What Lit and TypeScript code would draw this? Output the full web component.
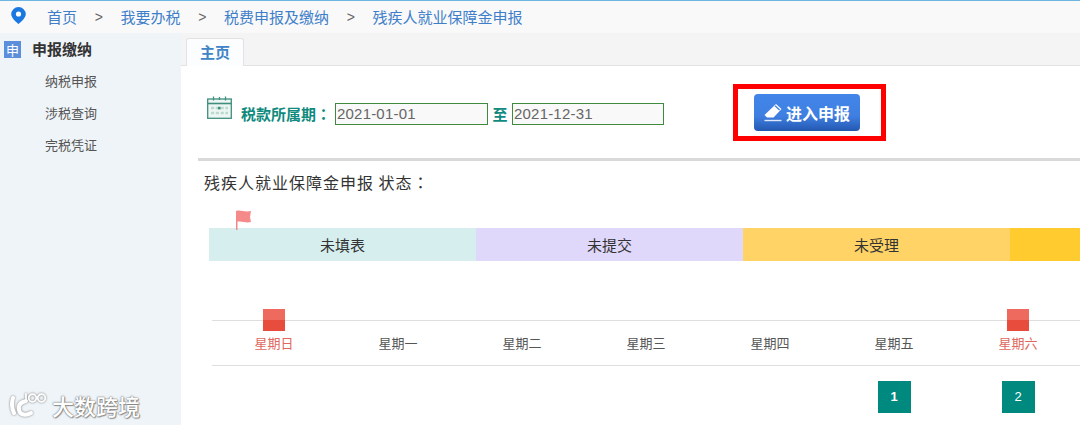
import { LitElement, html, css, svg } from "lit";
import { customElement } from "lit/decorators.js";

const FONT = css`"Noto Sans CJK SC", "Liberation Sans", sans-serif`;
const crumbs = ["首页", "我要办税", "税费申报及缴纳", "残疾人就业保障金申报"];
const menu = ["纳税申报", "涉税查询", "完税凭证"];
const stages = [
  { t: "未填表", c: "s1" },
  { t: "未提交", c: "s2" },
  { t: "未受理", c: "s3" },
  { t: "", c: "s4" },
];
const week = [
  { t: "星期日", off: true },
  { t: "星期一", off: false },
  { t: "星期二", off: false },
  { t: "星期三", off: false },
  { t: "星期四", off: false },
  { t: "星期五", off: false },
  { t: "星期六", off: true },
];
const days = ["", "", "", "", "", "1", "2"];

@customElement("app-root")
export class AppRoot extends LitElement {
  static styles = css`
    :host { display: block; width: 1080px; height: 425px; overflow: hidden; position: relative; background: #fff; font-family: ${FONT}; color: #333; }
    .top { border-top: 1px solid #6db6e2; background: #f9f9f9; display: flex; align-items: center; padding-left: 11px; box-sizing: border-box; height: 33px; }
    .pin { width: 15px; height: 17px; margin-top: -4px; margin-right: 21px; flex: none; }
    .crumb { font-size: 15px; color: #3f7fc9; line-height: 20px; }
    .sep { font-size: 14px; color: #666; width: 43.5px; text-align: center; font-family: "Liberation Sans", sans-serif; }
    .body { display: grid; grid-template-columns: 181px 1fr; height: 392px; }
    .side { background: #eff4f8; }
    .head { display: flex; align-items: center; padding: 6px 0 0 4px; height: 20px; gap: 11px; }
    .badge { width: 17px; height: 17px; background: #5b8fdc; color: #fff; font-size: 13px; line-height: 17px; text-align: center; }
    .head b { font-size: 15px; font-weight: 700; color: #333; line-height: 20px; }
    .menu { padding: 6px 0 0 45px; }
    .menu div { font-size: 13px; line-height: 32px; color: #555; }
    .main { display: flex; flex-direction: column; min-width: 0; }
    .tabs { height: 33px; background: #f4f4f4; border-bottom: 1px solid #e2e2e2; padding: 5px 0 0 5px; box-sizing: border-box; display: flex; }
    .tab { width: 58px; height: 28px; background: #fbfdfe; border: 1px solid #e2e2e2; border-bottom: 0; border-radius: 3px 3px 0 0; box-sizing: border-box; text-align: center; font-size: 15px; font-weight: 700; color: #3f85c6; line-height: 25px; }
    .filter { display: flex; height: 92px; box-sizing: border-box; padding: 29px 0 0 26px; align-items: flex-start; }
    .cal { width: 25px; height: 23px; margin-top: 1px; flex: none; }
    .lbl { font-size: 15px; font-weight: 700; color: #0f8a7e; line-height: 22px; margin: 8px 0 0 9px; white-space: nowrap; width: 94px; }
    .cm { font-family: "Noto Sans CJK TC", sans-serif; }
    .inp { height: 22px; width: 153px; box-sizing: border-box; border: 1px solid #3f8a3f; background: #f9f9f9; color: #666; font-family: "Liberation Sans", sans-serif; font-size: 15px; letter-spacing: .2px; line-height: 20px; padding-left: 1px; margin-top: 8px; }
    .inp.b { width: 152px; }
    .to { font-size: 15px; font-weight: 700; color: #0f8a7e; width: 24px; text-align: center; line-height: 22px; margin-top: 8px; }
    .gap { width: 69px; flex: none; }
    .hl { width: 153px; height: 57px; border: 5px solid #f00; box-sizing: border-box; margin-top: -11px; padding: 5px 0 0 16px; flex: none; }
    .btn { width: 106px; height: 37px; border-radius: 4px; background: linear-gradient(#4285e8 0%, #3f7fe2 60%, #2358b0 100%); display: flex; align-items: center; padding-left: 9px; gap: 3px; box-sizing: border-box; color: #fff; font-size: 16px; font-weight: 700; }
    .btn svg { width: 20px; height: 20px; flex: none; }
    .rule { height: 3px; background: #d9d9d9; margin-left: 17px; }
    .title { font-size: 16px; letter-spacing: 1px; line-height: 22px; color: #333; margin: 10px 0 0 23px; white-space: pre; }
    .flagrow { height: 37px; margin: 0 0 -2px 55px; display: flex; align-items: flex-end; flex: none; position: relative; }
    .flag { width: 16px; height: 20px; display: block; }
    .stages { display: grid; grid-template-columns: 267px 267px 267px 1fr; margin-left: 28px; height: 33px; flex: none; }
    .stages div { font-size: 15px; line-height: 33px; text-align: center; color: #333; }
    .s1 { background: #d6efee; } .s2 { background: #e0d8fb; } .s3 { background: #ffd366; } .s4 { background: #ffcb2e; }
    .week { display: grid; grid-template-columns: repeat(7, 124px); margin: 59px 0 0 31px; border-top: 1px solid #dedede; border-bottom: 1px solid #dedede; height: 46px; box-sizing: border-box; }
    .wd { position: relative; font-size: 13px; text-align: center; line-height: 44px; color: #555; }
    .wd.off { color: #e0675c; }
    .mark { position: absolute; top: -12px; left: 51px; width: 22px; height: 22px; background: linear-gradient(#ef6a5e 50%, #e84c3d 50%); }
    .days { display: grid; grid-template-columns: repeat(7, 124px); margin: 15px 0 0 31px; }
    .day { display: flex; justify-content: center; height: 32px; }
    .tile { width: 33px; height: 32px; background: #00897e; color: #fff; font-size: 13px; font-weight: 700; line-height: 32px; text-align: center; font-family: "Liberation Sans", sans-serif; }
    .tile.alt { font-weight: 400; }
    .wm { position: absolute; left: 10px; top: 391px; display: flex; align-items: center; gap: 5px; color: #fff; font-size: 22px; font-weight: 500; line-height: 28px; text-shadow: 0 0 2px #777, 0 0 1px #777, 1px 1px 1px #999; }
    .wm svg { width: 37px; height: 27px; flex: none; filter: drop-shadow(0 0 1px #777); }
  `;

  render() {
    return html`
      <div class="top">
        <svg class="pin" viewBox="0 0 15 17"><path fill="#1a78e0" d="M7.5 0A7.3 7.3 0 0 0 .2 7.3c0 4.2 7.3 9.7 7.3 9.7s7.3-5.5 7.3-9.7A7.3 7.3 0 0 0 7.5 0z"/><circle cx="7.5" cy="7" r="2.6" fill="#fff"/></svg>
        ${crumbs.map((c, i) => html`${i ? html`<span class="sep">&gt;</span>` : ""}<span class="crumb">${c}</span>`)}
      </div>
      <div class="body">
        <aside class="side">
          <div class="head"><span class="badge">申</span><b>申报缴纳</b></div>
          <div class="menu">${menu.map((m) => html`<div>${m}</div>`)}</div>
        </aside>
        <main class="main">
          <div class="tabs"><div class="tab">主页</div></div>
          <div class="filter">
            <svg class="cal" viewBox="0 0 25 23" fill="none" stroke="#3f8f7f" stroke-width="1.3">
              <rect x=".7" y="3" width="23.6" height="19.3" fill="#eef6f3"/>
              <path d="M.7 7.5h23.6" stroke-width="1.6"/>
              <path d="M6.5 .5v4M18.5 .5v4M12.5 1v3" />
              <path d="M4 12h17M4 17h17" stroke="#bcd9d0" stroke-width="2.4" stroke-dasharray="3.2 1.6"/>
              <rect x="11" y="10.8" width="2.6" height="2.6" fill="#3f8f7f" stroke="none"/>
            </svg>
            <span class="lbl">税款所属期<span class="cm">：</span></span>
            <div class="inp">2021-01-01</div>
            <span class="to">至</span>
            <div class="inp b">2021-12-31</div>
            <div class="gap"></div>
            <div class="hl">
              <div class="btn">
                <svg viewBox="0 0 20 20"><path fill="#fff" d="M13 1l5.5 5-8 8.5H4L1.5 12z" /><path fill="#3f7fe2" d="M11.6 3.2l.9-.9 4.6 4.2-.9.9z"/><rect x="1.5" y="16.8" width="17" height="1.4" fill="#dfe9fa"/></svg>
                <span>进入申报</span>
              </div>
            </div>
          </div>
          <div class="rule"></div>
          <div class="title">残疾人就业保障金申报 状态<span class="cm">：</span></div>
          <div class="flagrow">
            <svg class="flag" viewBox="0 0 16 20">${svg`<rect x="0" y="1" width="1.5" height="19" fill="#f08a8a"/><path fill="#f48a8a" d="M0 1c5-1.5 8 1.5 15 0l-1 6 1 5c-6 1.5-9-1.5-15 0z"/>`}</svg>
          </div>
          <div class="stages">
            ${stages.map((s) => html`<div class=${s.c}>${s.t}</div>`)}
          </div>
          <div class="week">
            ${week.map((w) => html`<div class="wd ${w.off ? "off" : ""}">${w.off ? html`<span class="mark"></span>` : ""}${w.t}</div>`)}
          </div>
          <div class="days">
            ${days.map((d) => html`<div class="day">${d ? html`<div class="tile ${d === "2" ? "alt" : ""}">${d}</div>` : ""}</div>`)}
          </div>
        </main>
      </div>
      <div class="wm">
        <svg viewBox="0 0 37 27" fill="none" stroke="#fff" stroke-width="4" stroke-linecap="round">
          <path d="M3 6c-1.5 5-1 11 1 15"/><path d="M16 9c-5 1-8 4-7 9 1 5 7 6 12 3"/>
          <g stroke-width="1.8"><path d="M16 2v7"/><circle cx="22.5" cy="6" r="3.8"/><circle cx="31.5" cy="6" r="3.8"/></g>
        </svg>
        <span>大数跨境</span>
      </div>
    `;
  }
}
